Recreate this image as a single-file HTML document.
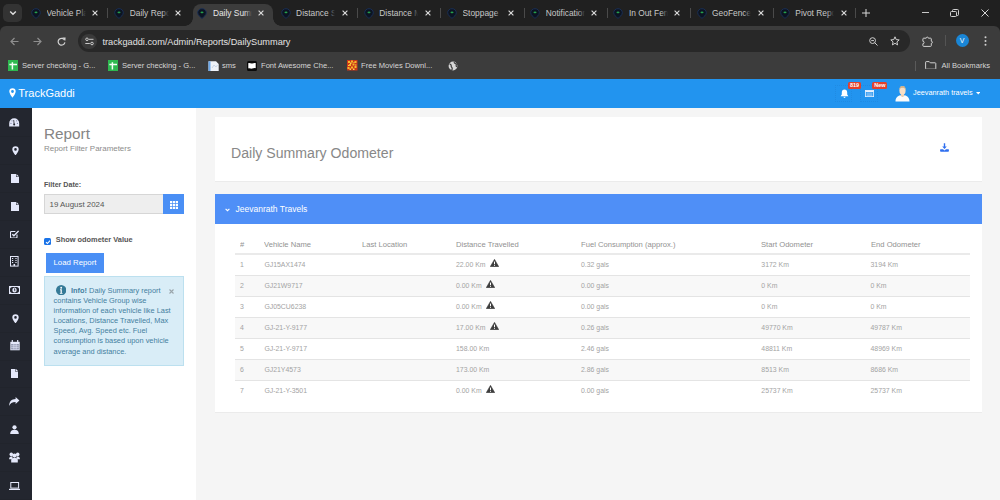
<!DOCTYPE html>
<html><head><meta charset="utf-8">
<style>
*{box-sizing:border-box;margin:0;padding:0}
html,body{width:1000px;height:500px;overflow:hidden;background:#f5f5f5;font-family:"Liberation Sans",sans-serif}
.a{position:absolute}
svg{display:block}
#tabs{left:0;top:0;width:1000px;height:32px;background:#202020}
#tool{left:0;top:26px;width:1000px;height:26px;background:#3c3c3c;border-radius:6px 6px 0 0}
#bm{left:0;top:52px;width:1000px;height:27px;background:#3c3c3c}
.tt{top:8px;font-size:8.4px;line-height:10px;white-space:nowrap;width:39px;overflow:hidden}
.tt i{position:absolute;right:0;top:0;width:7px;height:10px}
.sep{top:8px;width:1px;height:10px;background:#4a4a4a}
.bk{top:61px;font-size:7.6px;line-height:9px;color:#d6d6d6;white-space:nowrap}
#hdr{left:0;top:79px;width:1000px;height:29px;background:#2294ef}
#side{left:0;top:108px;width:32px;height:392px;background:#23262f}
#lp{left:32px;top:108px;width:164px;height:392px;background:#fff}
.th,.td{position:absolute;white-space:nowrap;line-height:9px}
.th{color:#929292;font-size:7.95px;transform:scaleX(.96);transform-origin:0 0}
.td{color:#a3a3a3;font-size:6.9px}
</style></head><body>
<div class="a" id="tabs"></div>
<div class="a" id="tool"></div>
<div class="a" id="bm"></div>
<!-- active tab -->
<div class="a" style="left:193px;top:4px;width:80px;height:22px;background:#3c3c3c;border-radius:8px 8px 0 0"></div>
<div class="a" style="left:185px;top:18px;width:8px;height:8px;background:radial-gradient(circle at 0 0,#202020 7.5px,#3c3c3c 8px)"></div>
<div class="a" style="left:273px;top:18px;width:8px;height:8px;background:radial-gradient(circle at 100% 0,#202020 7.5px,#3c3c3c 8px)"></div>
<!-- tab list button -->
<div class="a" style="left:3px;top:4px;width:19px;height:18px;background:#333;border-radius:5px"></div>
<svg class="a" style="left:9px;top:10px" width="8" height="6" viewBox="0 0 8 6"><path d="M1.2 1.5L4 4.3 6.8 1.5" stroke="#e0e0e0" stroke-width="1.4" fill="none"/></svg>
<svg class="a" style="left:31.0px;top:8px" width="10" height="11" viewBox="0 0 10 11"><path d="M5 .7C2.5.7.7 2.4.7 4.7c0 2.4 2.4 4 4.3 5.7 1.9-1.7 4.3-3.3 4.3-5.7C9.3 2.4 7.5.7 5 .7z" fill="#0c1422" stroke="#1a2f55" stroke-width="1"/><path d="M3.2 4.2c.9-.8 2.7-.8 3.6 0L5 5.4z" fill="#27a34d"/></svg>
<div class="a tt" style="left:46.5px;color:#c8c8c8">Vehicle Pla<i style="background:linear-gradient(90deg,rgba(0,0,0,0),#202020)"></i></div>
<svg class="a" style="left:92.0px;top:10px" width="6" height="6" viewBox="0 0 6 6"><path d="M.6.6l4.8 4.8M5.4.6l-4.8 4.8" stroke="#dadada" stroke-width="1.15"/></svg>
<svg class="a" style="left:114.2px;top:8px" width="10" height="11" viewBox="0 0 10 11"><path d="M5 .7C2.5.7.7 2.4.7 4.7c0 2.4 2.4 4 4.3 5.7 1.9-1.7 4.3-3.3 4.3-5.7C9.3 2.4 7.5.7 5 .7z" fill="#0c1422" stroke="#1a2f55" stroke-width="1"/><path d="M3.2 4.2c.9-.8 2.7-.8 3.6 0L5 5.4z" fill="#27a34d"/></svg>
<div class="a tt" style="left:129.7px;color:#c8c8c8">Daily Repo<i style="background:linear-gradient(90deg,rgba(0,0,0,0),#202020)"></i></div>
<svg class="a" style="left:175.2px;top:10px" width="6" height="6" viewBox="0 0 6 6"><path d="M.6.6l4.8 4.8M5.4.6l-4.8 4.8" stroke="#dadada" stroke-width="1.15"/></svg>
<svg class="a" style="left:197.4px;top:8px" width="10" height="11" viewBox="0 0 10 11"><path d="M5 .7C2.5.7.7 2.4.7 4.7c0 2.4 2.4 4 4.3 5.7 1.9-1.7 4.3-3.3 4.3-5.7C9.3 2.4 7.5.7 5 .7z" fill="#0c1422" stroke="#1a2f55" stroke-width="1"/><path d="M3.2 4.2c.9-.8 2.7-.8 3.6 0L5 5.4z" fill="#27a34d"/></svg>
<div class="a tt" style="left:212.9px;color:#e8e8e8">Daily Summ<i style="background:linear-gradient(90deg,rgba(0,0,0,0),#3c3c3c)"></i></div>
<svg class="a" style="left:258.4px;top:10px" width="6" height="6" viewBox="0 0 6 6"><path d="M.6.6l4.8 4.8M5.4.6l-4.8 4.8" stroke="#dadada" stroke-width="1.15"/></svg>
<svg class="a" style="left:280.6px;top:8px" width="10" height="11" viewBox="0 0 10 11"><path d="M5 .7C2.5.7.7 2.4.7 4.7c0 2.4 2.4 4 4.3 5.7 1.9-1.7 4.3-3.3 4.3-5.7C9.3 2.4 7.5.7 5 .7z" fill="#0c1422" stroke="#1a2f55" stroke-width="1"/><path d="M3.2 4.2c.9-.8 2.7-.8 3.6 0L5 5.4z" fill="#27a34d"/></svg>
<div class="a tt" style="left:296.1px;color:#c8c8c8">Distance S<i style="background:linear-gradient(90deg,rgba(0,0,0,0),#202020)"></i></div>
<svg class="a" style="left:341.6px;top:10px" width="6" height="6" viewBox="0 0 6 6"><path d="M.6.6l4.8 4.8M5.4.6l-4.8 4.8" stroke="#dadada" stroke-width="1.15"/></svg>
<svg class="a" style="left:363.8px;top:8px" width="10" height="11" viewBox="0 0 10 11"><path d="M5 .7C2.5.7.7 2.4.7 4.7c0 2.4 2.4 4 4.3 5.7 1.9-1.7 4.3-3.3 4.3-5.7C9.3 2.4 7.5.7 5 .7z" fill="#0c1422" stroke="#1a2f55" stroke-width="1"/><path d="M3.2 4.2c.9-.8 2.7-.8 3.6 0L5 5.4z" fill="#27a34d"/></svg>
<div class="a tt" style="left:379.3px;color:#c8c8c8">Distance M<i style="background:linear-gradient(90deg,rgba(0,0,0,0),#202020)"></i></div>
<svg class="a" style="left:424.8px;top:10px" width="6" height="6" viewBox="0 0 6 6"><path d="M.6.6l4.8 4.8M5.4.6l-4.8 4.8" stroke="#dadada" stroke-width="1.15"/></svg>
<svg class="a" style="left:447.0px;top:8px" width="10" height="11" viewBox="0 0 10 11"><path d="M5 .7C2.5.7.7 2.4.7 4.7c0 2.4 2.4 4 4.3 5.7 1.9-1.7 4.3-3.3 4.3-5.7C9.3 2.4 7.5.7 5 .7z" fill="#0c1422" stroke="#1a2f55" stroke-width="1"/><path d="M3.2 4.2c.9-.8 2.7-.8 3.6 0L5 5.4z" fill="#27a34d"/></svg>
<div class="a tt" style="left:462.5px;color:#c8c8c8">Stoppage<i style="background:linear-gradient(90deg,rgba(0,0,0,0),#202020)"></i></div>
<svg class="a" style="left:508.0px;top:10px" width="6" height="6" viewBox="0 0 6 6"><path d="M.6.6l4.8 4.8M5.4.6l-4.8 4.8" stroke="#dadada" stroke-width="1.15"/></svg>
<svg class="a" style="left:530.2px;top:8px" width="10" height="11" viewBox="0 0 10 11"><path d="M5 .7C2.5.7.7 2.4.7 4.7c0 2.4 2.4 4 4.3 5.7 1.9-1.7 4.3-3.3 4.3-5.7C9.3 2.4 7.5.7 5 .7z" fill="#0c1422" stroke="#1a2f55" stroke-width="1"/><path d="M3.2 4.2c.9-.8 2.7-.8 3.6 0L5 5.4z" fill="#27a34d"/></svg>
<div class="a tt" style="left:545.7px;color:#c8c8c8">Notification<i style="background:linear-gradient(90deg,rgba(0,0,0,0),#202020)"></i></div>
<svg class="a" style="left:591.2px;top:10px" width="6" height="6" viewBox="0 0 6 6"><path d="M.6.6l4.8 4.8M5.4.6l-4.8 4.8" stroke="#dadada" stroke-width="1.15"/></svg>
<svg class="a" style="left:613.4px;top:8px" width="10" height="11" viewBox="0 0 10 11"><path d="M5 .7C2.5.7.7 2.4.7 4.7c0 2.4 2.4 4 4.3 5.7 1.9-1.7 4.3-3.3 4.3-5.7C9.3 2.4 7.5.7 5 .7z" fill="#0c1422" stroke="#1a2f55" stroke-width="1"/><path d="M3.2 4.2c.9-.8 2.7-.8 3.6 0L5 5.4z" fill="#27a34d"/></svg>
<div class="a tt" style="left:628.9px;color:#c8c8c8">In Out Fen<i style="background:linear-gradient(90deg,rgba(0,0,0,0),#202020)"></i></div>
<svg class="a" style="left:674.4px;top:10px" width="6" height="6" viewBox="0 0 6 6"><path d="M.6.6l4.8 4.8M5.4.6l-4.8 4.8" stroke="#dadada" stroke-width="1.15"/></svg>
<svg class="a" style="left:696.6px;top:8px" width="10" height="11" viewBox="0 0 10 11"><path d="M5 .7C2.5.7.7 2.4.7 4.7c0 2.4 2.4 4 4.3 5.7 1.9-1.7 4.3-3.3 4.3-5.7C9.3 2.4 7.5.7 5 .7z" fill="#0c1422" stroke="#1a2f55" stroke-width="1"/><path d="M3.2 4.2c.9-.8 2.7-.8 3.6 0L5 5.4z" fill="#27a34d"/></svg>
<div class="a tt" style="left:712.1px;color:#c8c8c8">GeoFence<i style="background:linear-gradient(90deg,rgba(0,0,0,0),#202020)"></i></div>
<svg class="a" style="left:757.6px;top:10px" width="6" height="6" viewBox="0 0 6 6"><path d="M.6.6l4.8 4.8M5.4.6l-4.8 4.8" stroke="#dadada" stroke-width="1.15"/></svg>
<svg class="a" style="left:779.8px;top:8px" width="10" height="11" viewBox="0 0 10 11"><path d="M5 .7C2.5.7.7 2.4.7 4.7c0 2.4 2.4 4 4.3 5.7 1.9-1.7 4.3-3.3 4.3-5.7C9.3 2.4 7.5.7 5 .7z" fill="#0c1422" stroke="#1a2f55" stroke-width="1"/><path d="M3.2 4.2c.9-.8 2.7-.8 3.6 0L5 5.4z" fill="#27a34d"/></svg>
<div class="a tt" style="left:795.3px;color:#c8c8c8">Pivot Repo<i style="background:linear-gradient(90deg,rgba(0,0,0,0),#202020)"></i></div>
<svg class="a" style="left:840.8px;top:10px" width="6" height="6" viewBox="0 0 6 6"><path d="M.6.6l4.8 4.8M5.4.6l-4.8 4.8" stroke="#dadada" stroke-width="1.15"/></svg>
<div class="a sep" style="left:107.0px"></div>
<div class="a sep" style="left:357.0px"></div>
<div class="a sep" style="left:440.0px"></div>
<div class="a sep" style="left:523.8px"></div>
<div class="a sep" style="left:607.0px"></div>
<div class="a sep" style="left:690.0px"></div>
<div class="a sep" style="left:772.5px"></div>
<div class="a sep" style="left:855.0px"></div>
<!-- new tab + window controls -->
<svg class="a" style="left:862px;top:9px" width="8" height="8" viewBox="0 0 8 8"><path d="M4 0v8M0 4h8" stroke="#d8d8d8" stroke-width="1"/></svg>
<div class="a" style="left:922px;top:12px;width:7px;height:1px;background:#c8c8c8"></div>
<svg class="a" style="left:950px;top:9px" width="9" height="8" viewBox="0 0 9 8"><path d="M2.5 2.5V1.5A1 1 0 0 1 3.5.5h4a1 1 0 0 1 1 1v4a1 1 0 0 1-1 1h-1" stroke="#cfcfcf" stroke-width="1" fill="none"/><rect x=".5" y="2.5" width="6" height="5" rx="1" stroke="#cfcfcf" stroke-width="1" fill="none"/></svg>
<svg class="a" style="left:981px;top:9px" width="8" height="8" viewBox="0 0 8 8"><path d="M.5.5l7 7M7.5.5l-7 7" stroke="#d4d4d4" stroke-width="1"/></svg>
<!-- toolbar -->
<svg class="a" style="left:10px;top:37px" width="9" height="9" viewBox="0 0 9 9"><path d="M8.5 4.5H1.5M4.5 1L1 4.5 4.5 8" stroke="#8e8e8e" stroke-width="1.2" fill="none"/></svg>
<svg class="a" style="left:33px;top:37px" width="9" height="9" viewBox="0 0 9 9"><path d="M.5 4.5h7M4.5 1L8 4.5 4.5 8" stroke="#8e8e8e" stroke-width="1.2" fill="none"/></svg>
<svg class="a" style="left:56.5px;top:37px" width="9" height="9" viewBox="0 0 9 9"><path d="M7.6 3.2A3.4 3.4 0 1 0 7.9 5.4" stroke="#d2d2d2" stroke-width="1.2" fill="none"/><path d="M5.3 .6L8.6.4 8.4 3.7z" fill="#d2d2d2"/></svg>
<div class="a" style="left:78px;top:30.2px;width:832px;height:21.4px;background:#282828;border-radius:11px"></div>
<div class="a" style="left:81px;top:33.5px;width:15.5px;height:15.5px;background:#3a3a3a;border-radius:50%"></div>
<svg class="a" style="left:84.5px;top:37px" width="9" height="9" viewBox="0 0 9 9"><circle cx="2" cy="2.3" r="1.3" stroke="#d8d8d8" stroke-width=".9" fill="none"/><path d="M4 2.3h4.5M.3 6.5h4.5" stroke="#d8d8d8" stroke-width=".9"/><circle cx="7" cy="6.5" r="1.3" stroke="#d8d8d8" stroke-width=".9" fill="none"/></svg>
<div class="a" style="left:102.5px;top:36.8px;font-size:9.2px;line-height:11px;color:#e3e3e3;white-space:nowrap">trackgaddi.com/Admin/Reports/DailySummary</div>
<svg class="a" style="left:869px;top:36.5px" width="9" height="9" viewBox="0 0 9 9"><circle cx="3.6" cy="3.6" r="2.9" stroke="#d0d0d0" stroke-width="1" fill="none"/><path d="M2.2 3.6h2.8M5.7 5.7L8.5 8.5" stroke="#d0d0d0" stroke-width="1"/></svg>
<svg class="a" style="left:889.5px;top:36px" width="10" height="10" viewBox="0 0 10 10"><path d="M5 .8l1.2 2.8 3 .3-2.3 2 .7 3L5 7.3 2.4 8.9l.7-3-2.3-2 3-.3z" stroke="#d0d0d0" stroke-width="1" fill="none" stroke-linejoin="round"/></svg>
<svg class="a" style="left:922px;top:35.5px" width="11" height="11" viewBox="0 0 11 11"><path d="M1.6 2.2h2.6a1.1 1.1 0 0 1 2.2 0h2.2c.4 0 .7.3.7.7v2.3a1.1 1.1 0 0 1 0 2.2v2.3c0 .4-.3.7-.7.7H1.6c-.4 0-.7-.3-.7-.7v-2a1.2 1.2 0 0 0 0-2.4V2.9c0-.4.3-.7.7-.7z" stroke="#d0d0d0" stroke-width="1" fill="none" stroke-linejoin="round"/></svg>
<div class="a" style="left:944.5px;top:35px;width:1px;height:11px;background:#545454"></div>
<div class="a" style="left:955.5px;top:34.3px;width:13px;height:13px;background:#1a86d6;border-radius:50%;color:#fff;font-size:7px;line-height:13px;text-align:center">V</div>
<svg class="a" style="left:984px;top:36px" width="3" height="10" viewBox="0 0 3 10"><circle cx="1.5" cy="1.3" r="1" fill="#d0d0d0"/><circle cx="1.5" cy="5" r="1" fill="#d0d0d0"/><circle cx="1.5" cy="8.7" r="1" fill="#d0d0d0"/></svg>
<!-- bookmarks -->
<svg class="a" style="left:7.8px;top:60px" width="10.4" height="11" viewBox="0 0 10.4 11"><rect width="10.4" height="11" fill="#2eb84f"/><path d="M4.4 2.2v7.2M1.4 4.6h7.6" stroke="#f4fff6" stroke-width="1.5"/></svg>
<div class="a bk" style="left:22px">Server checking - G...</div>
<svg class="a" style="left:107.8px;top:60px" width="10.4" height="11" viewBox="0 0 10.4 11"><rect width="10.4" height="11" fill="#2eb84f"/><path d="M4.4 2.2v7.2M1.4 4.6h7.6" stroke="#f4fff6" stroke-width="1.5"/></svg>
<div class="a bk" style="left:122px">Server checking - G...</div>
<svg class="a" style="left:207.7px;top:60.5px" width="11" height="10.5" viewBox="0 0 11 10.5"><path d="M.5.3h7.5l2.7 2.7v7.3H.5z" fill="#eef2f8"/><path d="M.5.3h2v10h-2z" fill="#6aa6e8"/><path d="M4 7l2-3 2 2 1.5-2" stroke="#b9c9de" stroke-width=".7" fill="none"/></svg>
<div class="a bk" style="left:222px">sms</div>
<svg class="a" style="left:247px;top:60.5px" width="10" height="10" viewBox="0 0 10 10"><rect width="10" height="10" rx="1.5" fill="#0a0a0a"/><path d="M1.3 2.2c1.4-.6 2.6.6 3.9.2s2.4-.7 3.5-.3v5.2c-1.1-.4-2.3-.1-3.5.3s-2.5-.8-3.9-.2z" fill="#fff"/></svg>
<div class="a bk" style="left:261px">Font Awesome Che...</div>
<svg class="a" style="left:347px;top:60.3px" width="10.5" height="10.5" viewBox="0 0 10.5 10.5"><rect width="10.5" height="10.5" fill="#c9361a"/><path d="M1 1h2v2H1zM4 .5h2v2H4zM7.5 1h2v2h-2zM2 4h2v2H2zM5.5 3.5h2v2h-2zM.5 7h2v2h-2zM4 6.5h2v2H4zM7.5 6h2v2h-2z" fill="#f5b828"/><path d="M3 2.5h1.5v1.5H3zM6.5 2h1v1h-1zM1 5h1v1H1zM8 4.5h1.5v1H8zM2.5 8.5h1.5v1.5H2.5zM6 8.5h1.5v1.5H6z" fill="#f7d24a"/></svg>
<div class="a bk" style="left:361px">Free Movies Downl...</div>
<svg class="a" style="left:447.5px;top:60.5px" width="10" height="10" viewBox="0 0 10 10"><circle cx="5" cy="5" r="4.4" fill="#d6d6d6"/><path d="M1.6 3.2c1 .2 1.8.7 1.6 1.7s.6 1.4 1 2.2c.2.6-.2 1.6-.6 2.2M6.4.9c-.4.8.2 1.6 1 1.7.9.1 1.2.9.8 1.6-.3.6.1 1.3.9 1.5" stroke="#3c3c3c" stroke-width="1.2" fill="none"/></svg>
<div class="a" style="left:914.5px;top:60.5px;width:1px;height:10px;background:#5a5a5a"></div>
<svg class="a" style="left:925.3px;top:61px" width="11.4" height="8.4" viewBox="0 0 11.4 8.4"><path d="M.6 1.2c0-.3.2-.6.6-.6h3l1.1 1.2h4.9c.4 0 .6.3.6.6v5.2c0 .3-.2.6-.6.6H1.2c-.4 0-.6-.3-.6-.6z" stroke="#d0d0d0" stroke-width="1" fill="none" stroke-linejoin="round"/></svg>
<div class="a bk" style="left:941.5px">All Bookmarks</div>

<div class="a" id="hdr"></div>
<svg class="a" style="left:8.5px;top:87.8px" width="7" height="10" viewBox="0 0 7 10"><path d="M3.5.3A3.2 3.2 0 0 0 .3 3.5C.3 5.6 3.5 9.7 3.5 9.7S6.7 5.6 6.7 3.5A3.2 3.2 0 0 0 3.5.3zm0 1.8a1.4 1.4 0 1 1 0 2.8 1.4 1.4 0 0 1 0-2.8z" fill="#fff" fill-rule="evenodd"/></svg>
<div class="a" style="left:18.3px;top:86.8px;font-size:11px;line-height:13px;color:#fff;white-space:nowrap">TrackGaddi</div>
<!-- header right -->
<div class="a" style="left:835px;top:85px;width:17px;height:17px;border:1px dotted rgba(20,60,120,.09)"></div>
<div class="a" style="left:860px;top:85px;width:18px;height:17px;border:1px dotted rgba(20,60,120,.09)"></div>
<svg class="a" style="left:840px;top:88.5px" width="9" height="9" viewBox="0 0 9 9"><path d="M4.5.6c-1.7 0-2.7 1.3-2.7 3v2L.6 7.2h7.8L7.2 5.6v-2C7.2 1.9 6.2.6 4.5.6z" fill="#fff"/><path d="M3.4 7.8a1.1 1.1 0 0 0 2.2 0z" fill="#fff"/></svg>
<div class="a" style="left:848px;top:82.3px;width:13.2px;height:6.5px;background:#e2412c;border-radius:1.5px;color:#fff;font-size:5.5px;line-height:6.5px;font-weight:bold;text-align:center">819</div>
<svg class="a" style="left:865px;top:89.5px" width="9" height="7" viewBox="0 0 9 7"><rect x=".4" y=".4" width="8.2" height="6.2" fill="none" stroke="#e8f2ff" stroke-width=".8"/><rect x=".4" y=".4" width="8.2" height="1.6" fill="#e8f2ff"/><path d="M1.5 3h6M1.5 4.2h6M1.5 5.4h6" stroke="#cfe3fb" stroke-width=".6"/></svg>
<div class="a" style="left:872.4px;top:82.3px;width:15px;height:6.5px;background:#e2412c;border-radius:1.5px;color:#fff;font-size:5.5px;line-height:6.5px;font-weight:bold;text-align:center">New</div>
<svg class="a" style="left:894.5px;top:84.5px" width="15" height="17" viewBox="0 0 15 17"><path d="M.5 16.5c0-3.8 2.2-5.6 4.8-6.2l2.2 1.2 2.2-1.2c2.6.6 4.8 2.4 4.8 6.2z" fill="#fbfbfb"/><path d="M6 9h3v2.2L7.5 12 6 11.2z" fill="#f1cfae"/><ellipse cx="7.5" cy="5.4" rx="3.1" ry="4.4" fill="#f7dfc6"/><path d="M4.4 5C4.3 2.2 5.6.9 7.5.9s3.3 1.3 3.1 4.1c-.5-1.6-1.6-2.2-3.1-2.2S4.9 3.4 4.4 5z" fill="#cfae84"/></svg>
<div class="a" style="left:913px;top:87.5px;font-size:7.3px;line-height:9px;color:#fff;white-space:nowrap">Jeevanrath travels</div>
<svg class="a" style="left:975.5px;top:92px" width="4.5" height="3" viewBox="0 0 4.5 3"><path d="M0 0h4.5L2.25 2.5z" fill="#fff"/></svg>

<div class="a" id="side"></div>
<div class="a" style="left:0;top:136.3px;width:32px;height:1px;background:#21242c"></div>
<div class="a" style="left:0;top:164.2px;width:32px;height:1px;background:#21242c"></div>
<div class="a" style="left:0;top:192.1px;width:32px;height:1px;background:#21242c"></div>
<div class="a" style="left:0;top:220.0px;width:32px;height:1px;background:#21242c"></div>
<div class="a" style="left:0;top:247.9px;width:32px;height:1px;background:#21242c"></div>
<div class="a" style="left:0;top:275.8px;width:32px;height:1px;background:#21242c"></div>
<div class="a" style="left:0;top:303.7px;width:32px;height:1px;background:#21242c"></div>
<div class="a" style="left:0;top:331.6px;width:32px;height:1px;background:#21242c"></div>
<div class="a" style="left:0;top:359.5px;width:32px;height:1px;background:#21242c"></div>
<div class="a" style="left:0;top:387.4px;width:32px;height:1px;background:#21242c"></div>
<div class="a" style="left:0;top:415.3px;width:32px;height:1px;background:#21242c"></div>
<div class="a" style="left:0;top:443.2px;width:32px;height:1px;background:#21242c"></div>
<div class="a" style="left:0;top:471.1px;width:32px;height:1px;background:#21242c"></div>
<div class="a" style="left:0;top:499.0px;width:32px;height:1px;background:#21242c"></div>
<div class="a" style="left:9.4px;top:118px"><svg width="10.4" height="8.6" viewBox="0 0 10.4 8.6"><path d="M5.2.2A5 5 0 0 0 .2 5.2v3.4h10V5.2A5 5 0 0 0 5.2.2z" fill="#e4e8fa"/><path d="M5.2 6.6L4.7 2" stroke="#23262f" stroke-width=".8"/><circle cx="5.2" cy="6.4" r="1" fill="#23262f"/><circle cx="2" cy="5.4" r=".6" fill="#8088a8"/><circle cx="3" cy="2.8" r=".6" fill="#8088a8"/><circle cx="7.6" cy="2.8" r=".6" fill="#8088a8"/><circle cx="8.4" cy="5.4" r=".6" fill="#8088a8"/></svg></div>
<div class="a" style="left:11.6px;top:145.8px"><svg width="7" height="9.5" viewBox="0 0 7 9.5"><path d="M3.5.2A3.2 3.2 0 0 0 .3 3.4c0 2 3.2 6 3.2 6s3.2-4 3.2-6A3.2 3.2 0 0 0 3.5.2zm0 1.9a1.3 1.3 0 1 1 0 2.6 1.3 1.3 0 0 1 0-2.6z" fill="#e4e8fa" fill-rule="evenodd"/></svg></div>
<div class="a" style="left:10.8px;top:173.5px"><svg width="8" height="9" viewBox="0 0 8 9"><path d="M0 0h5v3h3v6H0z" fill="#e4e8fa"/><path d="M5.5 0L8 2.5H5.5z" fill="#e4e8fa"/></svg></div>
<div class="a" style="left:10.8px;top:201.5px"><svg width="8" height="9" viewBox="0 0 8 9"><path d="M0 0h5v3h3v6H0z" fill="#e4e8fa"/><path d="M5.5 0L8 2.5H5.5z" fill="#e4e8fa"/></svg></div>
<div class="a" style="left:10px;top:229.8px"><svg width="9" height="8.5" viewBox="0 0 9 8.5"><path d="M7 4.6v2.5a.9.9 0 0 1-.9.9H1.4a.9.9 0 0 1-.9-.9V2.4a.9.9 0 0 1 .9-.9h4" stroke="#e4e8fa" stroke-width="1.1" fill="none"/><path d="M2.3 4.2l1.6 1.6L8.6.9" stroke="#e4e8fa" stroke-width="1.4" fill="none"/></svg></div>
<div class="a" style="left:10.25px;top:256.3px"><svg width="8.6" height="10.6" viewBox="0 0 8.6 10.6"><rect x=".5" y=".5" width="7.6" height="9.6" stroke="#e4e8fa" stroke-width="1" fill="none"/><path d="M2 2h1.2v1H2zM5.4 2h1.2v1H5.4zM2 4h1.2v1H2zM5.4 4h1.2v1H5.4zM2 6h1.2v1H2zM5.4 6h1.2v1H5.4zM3.5 8h1.6v2H3.5z" fill="#e4e8fa"/></svg></div>
<div class="a" style="left:8.8px;top:286px"><svg width="11" height="8" viewBox="0 0 11 8"><rect x=".5" y=".5" width="10" height="7" stroke="#e4e8fa" stroke-width="1" fill="none"/><path d="M1.5 1.5h8v5h-8z" fill="none"/><ellipse cx="5.5" cy="4" rx="2.2" ry="2.6" fill="#e4e8fa"/><path d="M5.2 2.8h.6v2.4" stroke="#23262f" stroke-width=".7"/><path d="M1 2l1.5-1M1 6l1.5 1M10 2L8.5 1M10 6L8.5 7" stroke="#e4e8fa" stroke-width="1"/></svg></div>
<div class="a" style="left:11.6px;top:313.5px"><svg width="7" height="9.5" viewBox="0 0 7 9.5"><path d="M3.5.2A3.2 3.2 0 0 0 .3 3.4c0 2 3.2 6 3.2 6s3.2-4 3.2-6A3.2 3.2 0 0 0 3.5.2zm0 1.9a1.3 1.3 0 1 1 0 2.6 1.3 1.3 0 0 1 0-2.6z" fill="#e4e8fa" fill-rule="evenodd"/></svg></div>
<div class="a" style="left:9.8px;top:340.3px"><svg width="10" height="10.6" viewBox="0 0 10 10.6"><path d="M.3 1.8h9.4v8.5H.3z" fill="#e4e8fa"/><path d="M2.3 0v2.6M7.7 0v2.6" stroke="#e4e8fa" stroke-width="1.2"/><path d="M1.2 4h7.6v5.4H1.2z" fill="#8a90a8"/><path d="M3.3 4v5.4M5 4v5.4M6.7 4v5.4M1.2 5.8h7.6M1.2 7.6h7.6" stroke="#e4e8fa" stroke-width=".6"/></svg></div>
<div class="a" style="left:10.7px;top:369.2px"><svg width="7.5" height="9" viewBox="0 0 7.5 9"><path d="M0 0h4.5v3h3v6H0z" fill="#e4e8fa"/><path d="M5 0l2.5 2.5H5z" fill="#e4e8fa"/></svg></div>
<div class="a" style="left:9.3px;top:397.3px"><svg width="10.6" height="9" viewBox="0 0 10.6 9"><path d="M10.4 3.4L6.6 0v2C2.5 2.2.2 4.2.2 9 1.2 6.4 3 5.2 6.6 5.1v2z" fill="#e4e8fa"/></svg></div>
<div class="a" style="left:10.25px;top:424.8px"><svg width="9" height="9" viewBox="0 0 9 9"><circle cx="4.5" cy="2.3" r="2.1" fill="#e4e8fa"/><path d="M.2 9c0-3 1.6-4.3 4.3-4.3S8.8 6 8.8 9z" fill="#e4e8fa"/></svg></div>
<div class="a" style="left:8.8px;top:452.3px"><svg width="11" height="10.6" viewBox="0 0 11 10.6"><circle cx="2.3" cy="2.4" r="1.8" fill="#e4e8fa"/><circle cx="8.7" cy="2.4" r="1.8" fill="#e4e8fa"/><circle cx="5.5" cy="3.6" r="2.1" fill="#e4e8fa"/><path d="M.1 7.2C.1 5.4.9 4.6 2.3 4.6h1.2v2.6z" fill="#e4e8fa"/><path d="M10.9 7.2c0-1.8-.8-2.6-2.2-2.6H7.5v2.6z" fill="#e4e8fa"/><path d="M2.2 10.6V8.4c0-1.6 1-2.4 2.2-2.4h2.2c1.2 0 2.2.8 2.2 2.4v2.2z" fill="#e4e8fa"/></svg></div>
<div class="a" style="left:8.8px;top:481.8px"><svg width="11.4" height="8" viewBox="0 0 11.4 8"><rect x="1.8" y=".5" width="7.8" height="5.6" stroke="#e4e8fa" stroke-width="1" fill="none"/><path d="M0 6.8h11.4V8H0z" fill="#e4e8fa"/></svg></div>
<div class="a" id="lp"></div>
<div class="a" style="left:44px;top:125px;font-size:15.3px;line-height:17px;color:#858585;white-space:nowrap">Report</div>
<div class="a" style="left:44px;top:143.8px;font-size:7.95px;line-height:9px;color:#8c8c8c;white-space:nowrap">Report Filter Parameters</div>
<div class="a" style="left:44px;top:181px;font-size:7.1px;line-height:9px;color:#555;font-weight:bold;white-space:nowrap">Filter Date:</div>
<div class="a" style="left:44px;top:194.3px;width:119px;height:20.2px;background:#eee;border:1px solid #d6d6d6;border-right:0"></div>
<div class="a" style="left:49.5px;top:200px;font-size:7.9px;line-height:9px;color:#555;white-space:nowrap">19 August 2024</div>
<div class="a" style="left:163px;top:194.3px;width:21px;height:20.2px;background:#4a8ff5"></div>
<svg class="a" style="left:169.5px;top:200.5px" width="8" height="8" viewBox="0 0 8 8"><path d="M0 0h2.2v2.2H0zM2.9 0h2.2v2.2H2.9zM5.8 0H8v2.2H5.8zM0 2.9h2.2v2.2H0zM2.9 2.9h2.2v2.2H2.9zM5.8 2.9H8v2.2H5.8zM0 5.8h2.2V8H0zM2.9 5.8h2.2V8H2.9zM5.8 5.8H8V8H5.8z" fill="#fff"/></svg>
<div class="a" style="left:44px;top:237.8px;width:7px;height:7px;background:#1a73e8;border-radius:1.5px"></div>
<svg class="a" style="left:44.5px;top:238.5px" width="6" height="6" viewBox="0 0 6 6"><path d="M1 3.1l1.4 1.4L5 1.6" stroke="#fff" stroke-width="1.1" fill="none"/></svg>
<div class="a" style="left:55.8px;top:235.3px;font-size:7.4px;line-height:9px;color:#555;font-weight:bold;white-space:nowrap">Show odometer Value</div>
<div class="a" style="left:46px;top:252.8px;width:57.6px;height:20px;background:#4a8ff5;color:#fff;font-size:7.8px;line-height:20px;padding-left:7.5px;white-space:nowrap">Load Report</div>
<div class="a" style="left:43.6px;top:276px;width:140.8px;height:90.4px;background:#d9edf7;border:1px solid #bce0ef"></div>
<svg class="a" style="left:55.8px;top:285px" width="10.4" height="10.4" viewBox="0 0 10 10"><circle cx="5" cy="5" r="5" fill="#357a97"/><circle cx="5" cy="2.6" r=".9" fill="#fff"/><path d="M3.9 4.2h1.7v3.4h.7v.9H3.7v-.9h.7V5.1h-.5z" fill="#fff"/></svg>
<div class="a" style="left:53.6px;top:285.6px;width:125px;font-size:7.4px;line-height:10.15px;color:#44809f;white-space:nowrap"><span style="display:inline-block;width:17.4px"></span><b>Info!</b> Daily Summary report<br>contains Vehicle Group wise<br>information of each vehicle like Last<br>Locations, Distance Travelled, Max<br>Speed, Avg. Speed etc. Fuel<br>consumption is based upon vehicle<br>average and distance.</div>
<svg class="a" style="left:169px;top:289px" width="5" height="5" viewBox="0 0 5 5"><path d="M.5.5l4 4M4.5.5l-4 4" stroke="#9aa5ab" stroke-width="1.1"/></svg>

<!-- main -->
<div class="a" style="left:215px;top:117px;width:767px;height:64px;background:#fff;box-shadow:0 1px 0 #ebebeb"></div>
<div class="a" style="left:230.7px;top:143.6px;font-size:15.1px;line-height:17px;color:#888;white-space:nowrap;transform:scaleX(.935);transform-origin:0 0">Daily Summary Odometer</div>
<svg class="a" style="left:940px;top:143px" width="9" height="9" viewBox="0 0 9 9"><path d="M3.8 .3h1.4v3.2h1.6L4.5 5.9 2.2 3.5h1.6z" fill="#2f6fef"/><path d="M.6 6.2h2.4l1.5 1.2 1.5-1.2h2.4c.3 0 .5.2.5.5v1.4c0 .4-.3.7-.7.7H.8c-.4 0-.7-.3-.7-.7V6.7c0-.3.2-.5.5-.5z" fill="#2f6fef"/></svg>
<div class="a" style="left:215px;top:194px;width:767px;height:30px;background:#4f8ff7"></div>
<svg class="a" style="left:224.5px;top:207.5px" width="5" height="4" viewBox="0 0 5 4"><path d="M.6.8L2.5 2.7 4.4.8" stroke="#fff" stroke-width="1.1" fill="none"/></svg>
<div class="a" style="left:235.5px;top:203.5px;font-size:8.5px;line-height:10px;color:#fff;white-space:nowrap">Jeevanrath Travels</div>
<div class="a" style="left:215px;top:224px;width:767px;height:188px;background:#fff;box-shadow:0 1px 0 #ebebeb"></div>
<div class="a" style="left:235px;top:253px;width:735px;height:1.5px;background:#eaeaea"></div>
<div class="th" style="left:240px;top:239.6px">#</div>
<div class="th" style="left:264.4px;top:239.6px">Vehicle Name</div>
<div class="th" style="left:362px;top:239.6px">Last Location</div>
<div class="th" style="left:456px;top:239.6px">Distance Travelled</div>
<div class="th" style="left:581px;top:239.6px">Fuel Consumption (approx.)</div>
<div class="th" style="left:761.3px;top:239.6px">Start Odometer</div>
<div class="th" style="left:870.5px;top:239.6px">End Odometer</div>
<div class="a" style="left:235px;top:275.0px;width:735px;height:1px;background:#e4e4e4"></div>
<div class="td" style="left:240px;top:259.8px">1</div>
<div class="td" style="left:264.4px;top:259.8px">GJ15AX1474</div>
<div class="td" style="left:456px;top:259.8px">22.00 Km<svg style="display:inline-block;vertical-align:top;margin-left:4.5px;margin-top:-0.5px" width="9" height="8" viewBox="0 0 9 8"><path d="M4.5.3L8.8 7.7H.2z" fill="#3d3d3d" stroke="#3d3d3d" stroke-width=".5" stroke-linejoin="round"/><path d="M4.5 2.6v2.6M4.5 5.9v.9" stroke="#fff" stroke-width="1"/></svg></div>
<div class="td" style="left:581px;top:259.8px">0.32 gals</div>
<div class="td" style="left:761.3px;top:259.8px">3172 Km</div>
<div class="td" style="left:870.5px;top:259.8px">3194 Km</div>
<div class="a" style="left:235px;top:275.5px;width:735px;height:21px;background:#f8f8f8"></div>
<div class="a" style="left:235px;top:296.0px;width:735px;height:1px;background:#e4e4e4"></div>
<div class="td" style="left:240px;top:280.8px">2</div>
<div class="td" style="left:264.4px;top:280.8px">GJ21W9717</div>
<div class="td" style="left:456px;top:280.8px">0.00 Km<svg style="display:inline-block;vertical-align:top;margin-left:4.5px;margin-top:-0.5px" width="9" height="8" viewBox="0 0 9 8"><path d="M4.5.3L8.8 7.7H.2z" fill="#3d3d3d" stroke="#3d3d3d" stroke-width=".5" stroke-linejoin="round"/><path d="M4.5 2.6v2.6M4.5 5.9v.9" stroke="#fff" stroke-width="1"/></svg></div>
<div class="td" style="left:581px;top:280.8px">0.00 gals</div>
<div class="td" style="left:761.3px;top:280.8px">0 Km</div>
<div class="td" style="left:870.5px;top:280.8px">0 Km</div>
<div class="a" style="left:235px;top:317.0px;width:735px;height:1px;background:#e4e4e4"></div>
<div class="td" style="left:240px;top:301.8px">3</div>
<div class="td" style="left:264.4px;top:301.8px">GJ05CU6238</div>
<div class="td" style="left:456px;top:301.8px">0.00 Km<svg style="display:inline-block;vertical-align:top;margin-left:4.5px;margin-top:-0.5px" width="9" height="8" viewBox="0 0 9 8"><path d="M4.5.3L8.8 7.7H.2z" fill="#3d3d3d" stroke="#3d3d3d" stroke-width=".5" stroke-linejoin="round"/><path d="M4.5 2.6v2.6M4.5 5.9v.9" stroke="#fff" stroke-width="1"/></svg></div>
<div class="td" style="left:581px;top:301.8px">0.00 gals</div>
<div class="td" style="left:761.3px;top:301.8px">0 Km</div>
<div class="td" style="left:870.5px;top:301.8px">0 Km</div>
<div class="a" style="left:235px;top:317.5px;width:735px;height:21px;background:#f8f8f8"></div>
<div class="a" style="left:235px;top:338.0px;width:735px;height:1px;background:#e4e4e4"></div>
<div class="td" style="left:240px;top:322.8px">4</div>
<div class="td" style="left:264.4px;top:322.8px">GJ-21-Y-9177</div>
<div class="td" style="left:456px;top:322.8px">17.00 Km<svg style="display:inline-block;vertical-align:top;margin-left:4.5px;margin-top:-0.5px" width="9" height="8" viewBox="0 0 9 8"><path d="M4.5.3L8.8 7.7H.2z" fill="#3d3d3d" stroke="#3d3d3d" stroke-width=".5" stroke-linejoin="round"/><path d="M4.5 2.6v2.6M4.5 5.9v.9" stroke="#fff" stroke-width="1"/></svg></div>
<div class="td" style="left:581px;top:322.8px">0.26 gals</div>
<div class="td" style="left:761.3px;top:322.8px">49770 Km</div>
<div class="td" style="left:870.5px;top:322.8px">49787 Km</div>
<div class="a" style="left:235px;top:359.0px;width:735px;height:1px;background:#e4e4e4"></div>
<div class="td" style="left:240px;top:343.8px">5</div>
<div class="td" style="left:264.4px;top:343.8px">GJ-21-Y-9717</div>
<div class="td" style="left:456px;top:343.8px">158.00 Km</div>
<div class="td" style="left:581px;top:343.8px">2.46 gals</div>
<div class="td" style="left:761.3px;top:343.8px">48811 Km</div>
<div class="td" style="left:870.5px;top:343.8px">48969 Km</div>
<div class="a" style="left:235px;top:359.5px;width:735px;height:21px;background:#f8f8f8"></div>
<div class="a" style="left:235px;top:380.0px;width:735px;height:1px;background:#e4e4e4"></div>
<div class="td" style="left:240px;top:364.8px">6</div>
<div class="td" style="left:264.4px;top:364.8px">GJ21Y4573</div>
<div class="td" style="left:456px;top:364.8px">173.00 Km</div>
<div class="td" style="left:581px;top:364.8px">2.86 gals</div>
<div class="td" style="left:761.3px;top:364.8px">8513 Km</div>
<div class="td" style="left:870.5px;top:364.8px">8686 Km</div>
<div class="td" style="left:240px;top:385.8px">7</div>
<div class="td" style="left:264.4px;top:385.8px">GJ-21-Y-3501</div>
<div class="td" style="left:456px;top:385.8px">0.00 Km<svg style="display:inline-block;vertical-align:top;margin-left:4.5px;margin-top:-0.5px" width="9" height="8" viewBox="0 0 9 8"><path d="M4.5.3L8.8 7.7H.2z" fill="#3d3d3d" stroke="#3d3d3d" stroke-width=".5" stroke-linejoin="round"/><path d="M4.5 2.6v2.6M4.5 5.9v.9" stroke="#fff" stroke-width="1"/></svg></div>
<div class="td" style="left:581px;top:385.8px">0.00 gals</div>
<div class="td" style="left:761.3px;top:385.8px">25737 Km</div>
<div class="td" style="left:870.5px;top:385.8px">25737 Km</div>
</body></html>
